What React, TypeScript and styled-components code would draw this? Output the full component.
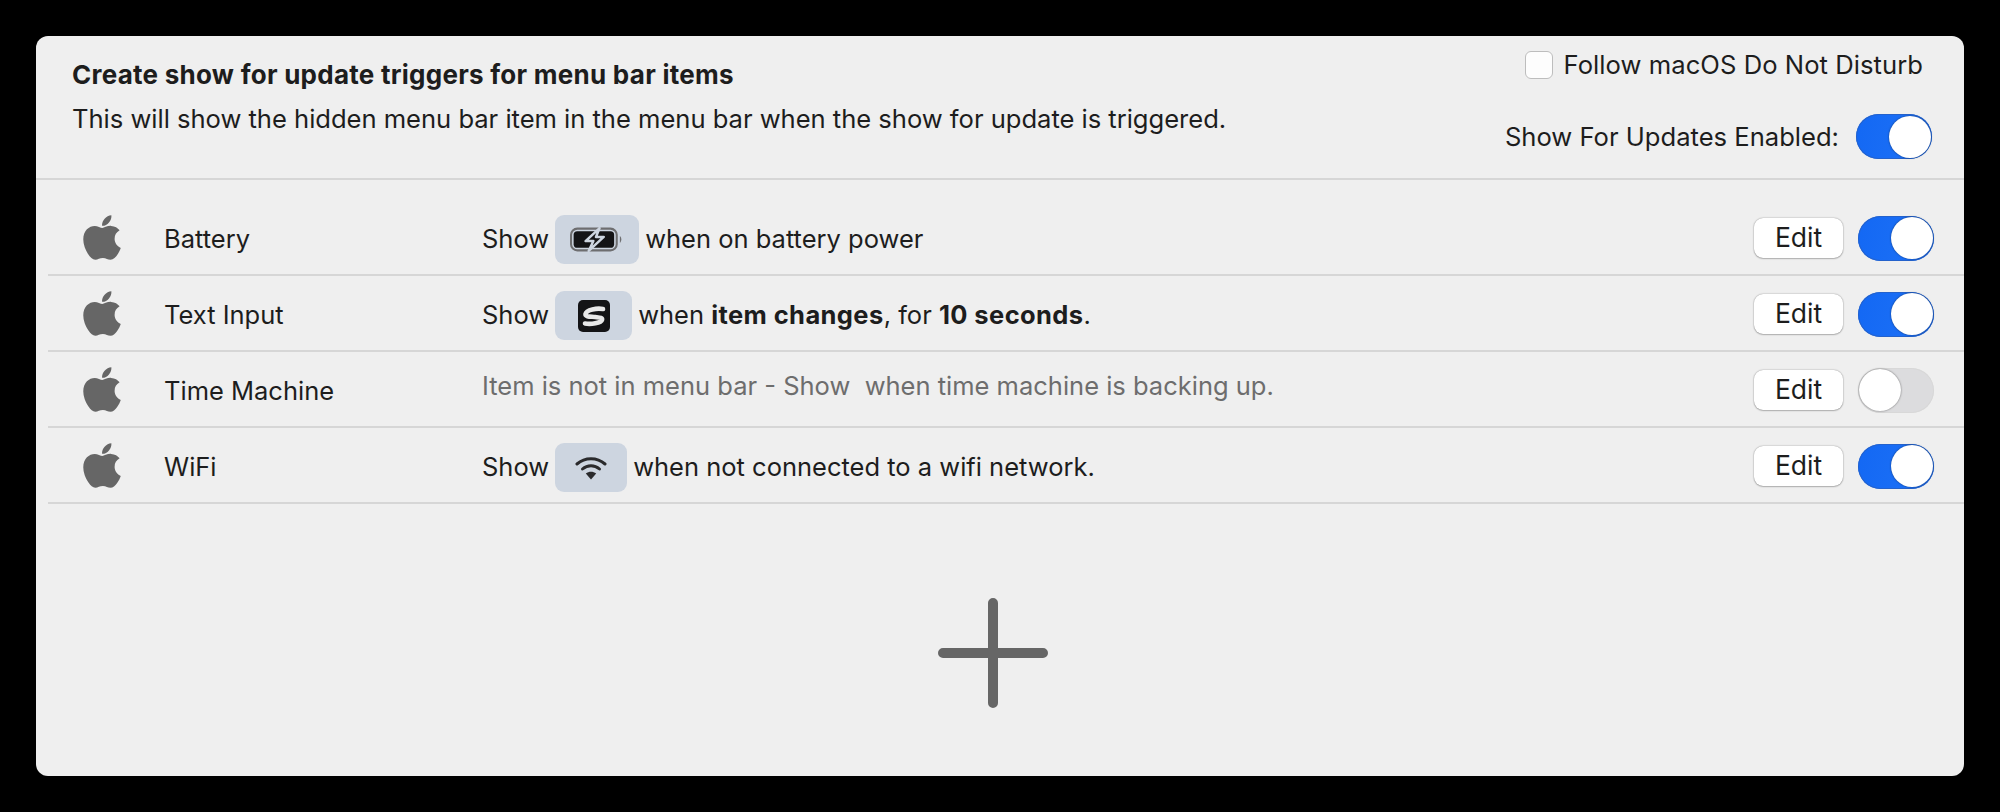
import React from 'react'
import styled, { createGlobalStyle } from 'styled-components'
import { FaApple } from 'react-icons/fa'

const GlobalStyle = createGlobalStyle`
  html, body {
    margin: 0;
    background: #000;
    font-family: Inter, "Liberation Sans", sans-serif;
    color: #1d1d1d;
  }
`

const Page = styled.div`
  width: 2000px;
  height: 812px;
  padding: 36px;
  box-sizing: border-box;
`

const Panel = styled.div`
  height: 740px;
  background: #efefef;
  border-radius: 12px;
  overflow: hidden;
`

const Header = styled.div`
  height: 142px;
  border-bottom: 2px solid #d6d6d6;
  display: flex;
  justify-content: space-between;
  padding: 0 32px 0 36px;
`

const Titles = styled.div`
  padding-top: 22px;
`

const Title = styled.div`
  font-size: 26px;
  line-height: 34px;
  font-weight: 700;
  letter-spacing: 0.26px;
`

const Subtitle = styled.div`
  font-size: 25.6px;
  line-height: 34px;
  margin-top: 10px;
  letter-spacing: -0.03px;
`

const HeaderControls = styled.div`
  display: flex;
  flex-direction: column;
  align-items: flex-end;
  padding-top: 14px;
`

const DndRow = styled.label`
  display: flex;
  align-items: center;
  gap: 11px;
  font-size: 25.6px;
  line-height: 30px;
  letter-spacing: 0.05px;
  margin-right: 9px;
`

const Checkbox = styled.span`
  width: 28px;
  height: 28px;
  box-sizing: border-box;
  background: #fdfdfd;
  border: 1px solid #bdbdbd;
  border-radius: 6px;
`

const EnabledRow = styled.div`
  display: flex;
  align-items: center;
  gap: 17px;
  margin-top: 34px;
  font-size: 25.6px;
`

const Switch = styled.span<{ $on: boolean }>`
  display: flex;
  justify-content: ${({ $on }) => ($on ? 'flex-end' : 'flex-start')};
  align-items: center;
  width: 76px;
  height: 45px;
  box-sizing: border-box;
  padding: 1px;
  border-radius: 23px;
  background: ${({ $on }) => ($on ? 'linear-gradient(100deg, #1368f4, #1f72f6)' : '#dcdcde')};
  box-shadow: ${({ $on }) => ($on ? 'inset 0 0 0 1px #2462cc' : 'inset 0 0 0 1px #d8d8d8')};
`

const Knob = styled.span`
  width: 42px;
  height: 42px;
  border-radius: 50%;
  background: #fff;
  box-shadow: 0 0 2px rgba(0, 0, 0, 0.55);
`

const Rows = styled.div`
  margin: 20px 0 0 12px;

  ${Switch} {
    margin-top: 2px;
  }
`

const Row = styled.div`
  display: grid;
  grid-template-columns: 81px 318px 1fr auto auto;
  align-items: center;
  height: 76px;
  box-sizing: border-box;
  padding: 0 30px 0 35px;
  border-bottom: 2px solid #d6d6d6;
  font-size: 25.5px;
`

const AppIcon = styled(FaApple)`
  width: 50px;
  height: 51px;
  margin-left: -6px;
  color: #666666;
`

const Name = styled.div`
  padding-top: 2px;
`

const Description = styled.div`
  display: flex;
  align-items: center;
  gap: 6px;
  padding-top: 3px;
  white-space: pre;

  b {
    letter-spacing: 0.4px;
  }
`

const Muted = styled.div`
  color: #6d6d6d;
  margin-bottom: 8px;
  white-space: pre;
`

const Chip = styled.span<{ $width: number }>`
  display: flex;
  align-items: center;
  justify-content: center;
  width: ${({ $width }) => $width}px;
  height: 49px;
  margin-top: 2px;
  border-radius: 9px;
  background: #cdd5e0;
`

const EditButton = styled.button`
  width: 89px;
  height: 40px;
  padding: 0 0 2px;
  margin: 2px 15px 0 0;
  border: 0;
  border-radius: 9px;
  background: #fff;
  color: #1d1d1d;
  font: inherit;
  font-size: 26.5px;
  box-shadow: 0 0 1.5px rgba(0, 0, 0, 0.45), 0 1px 1.5px rgba(0, 0, 0, 0.2);
`

const AddArea = styled.div`
  display: flex;
  justify-content: center;
  padding: 94px 14px 0 0;
`

const BatteryIcon = () => (
  <svg width="54" height="27" viewBox="0 0 52 26">
    <rect x="1" y="2.5" width="44" height="21" rx="6" fill="none" stroke="#6e6e70" strokeWidth="2" />
    <rect x="3.5" y="5" width="39" height="16" rx="3.5" fill="#141416" />
    <path
      d="M28.5 2 L15 14.5 H22.5 L18 24 L32.5 10.5 H25 Z"
      fill="#141416"
      stroke="#cdd5e0"
      strokeWidth="2.4"
      strokeLinejoin="round"
    />
    <path d="M48 9.5 Q51 13 48 16.5 Z" fill="#6e6e70" />
  </svg>
)

const SIcon = () => (
  <svg width="32" height="32" viewBox="0 0 32 32">
    <rect width="32" height="32" rx="5" fill="#141416" />
    <path
      d="M25 9 C19 8 8.5 9.5 7.5 14 C7 17 13 16.5 17 17 C21 17.5 25 17.5 24 20 C23 23 13 24.5 7 23.5"
      fill="none"
      stroke="#e8e8e8"
      strokeWidth="4.6"
      strokeLinecap="round"
    />
  </svg>
)

const WifiIcon = () => (
  <svg width="32" height="24" viewBox="0 0 32 24">
    <g fill="none" stroke="#2a2a2c" strokeWidth="3" strokeLinecap="round">
      <path d="M2 8 C10 1 22 1 30 8" />
      <path d="M7.5 13 C12.5 8.5 19.5 8.5 24.5 13" />
    </g>
    <path d="M16 23.5 L10.8 17.6 C14 15 18 15 21.2 17.6 Z" fill="#2a2a2c" />
  </svg>
)

const PlusIcon = () => (
  <svg width="110" height="110" viewBox="0 0 110 110">
    <path d="M55 5 V105 M5 55 H105" stroke="#666666" strokeWidth="10" strokeLinecap="round" />
  </svg>
)

const rows = [
  {
    name: 'Battery',
    on: true,
    body: (
      <Description>
        Show
        <Chip $width={84}>
          <BatteryIcon />
        </Chip>
        when on battery power
      </Description>
    ),
  },
  {
    name: 'Text Input',
    on: true,
    body: (
      <Description>
        Show
        <Chip $width={77}>
          <SIcon />
        </Chip>
        <span>
          when <b>item changes</b>, for <b>10 seconds</b>.
        </span>
      </Description>
    ),
  },
  {
    name: 'Time Machine',
    on: false,
    body: <Muted>Item is not in menu bar - Show  when time machine is backing up.</Muted>,
  },
  {
    name: 'WiFi',
    on: true,
    body: (
      <Description>
        Show
        <Chip $width={72}>
          <WifiIcon />
        </Chip>
        when not connected to a wifi network.
      </Description>
    ),
  },
]

const App = () => (
  <Page>
    <GlobalStyle />
    <Panel>
      <Header>
        <Titles>
          <Title>Create show for update triggers for menu bar items</Title>
          <Subtitle>This will show the hidden menu bar item in the menu bar when the show for update is triggered.</Subtitle>
        </Titles>
        <HeaderControls>
          <DndRow>
            <Checkbox />
            Follow macOS Do Not Disturb
          </DndRow>
          <EnabledRow>
            Show For Updates Enabled:
            <Switch $on>
              <Knob />
            </Switch>
          </EnabledRow>
        </HeaderControls>
      </Header>
      <Rows>
        {rows.map((row) => (
          <Row key={row.name}>
            <AppIcon />
            <Name>{row.name}</Name>
            {row.body}
            <EditButton>Edit</EditButton>
            <Switch $on={row.on}>
              <Knob />
            </Switch>
          </Row>
        ))}
      </Rows>
      <AddArea>
        <PlusIcon />
      </AddArea>
    </Panel>
  </Page>
)

export default App
